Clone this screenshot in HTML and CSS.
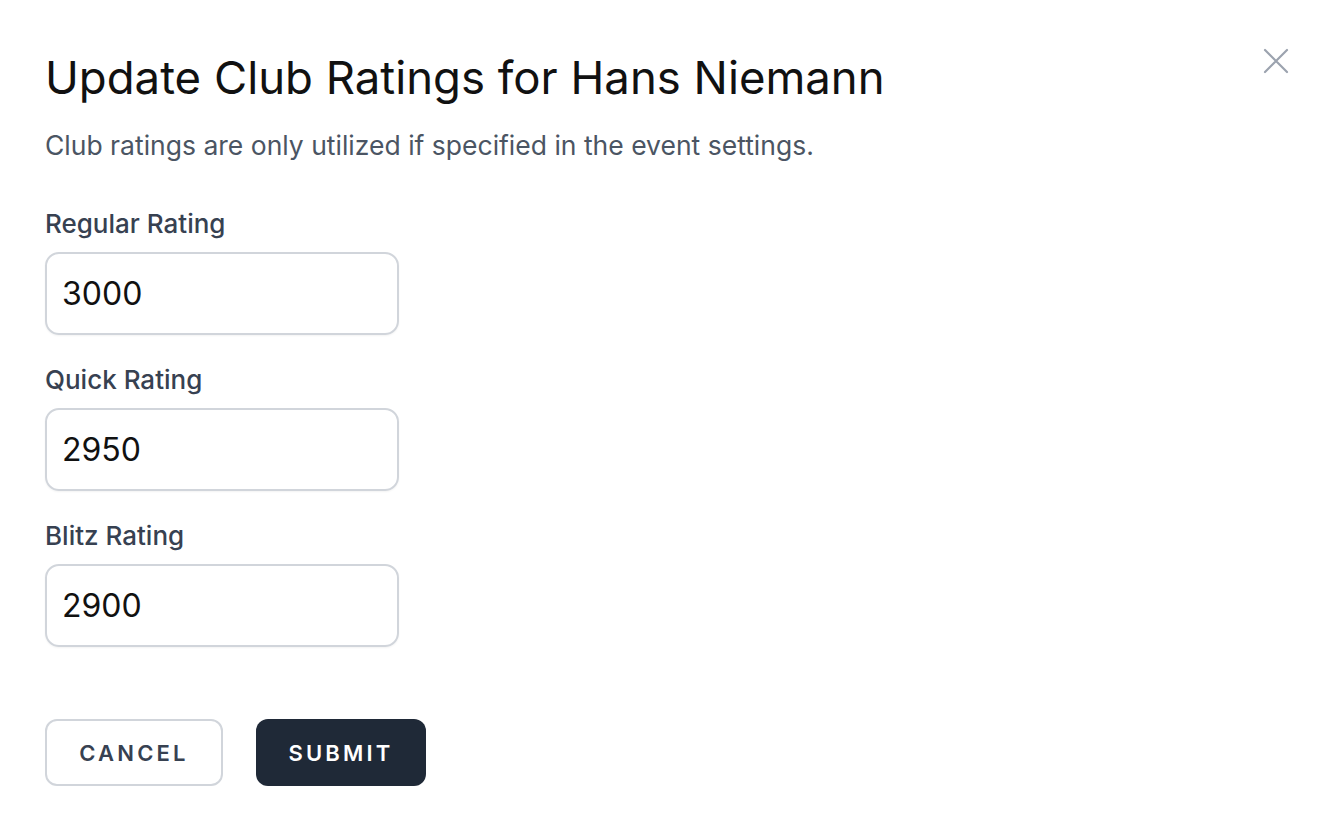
FILE: index.html
```html
<!DOCTYPE html>
<html>
<head>
<meta charset="utf-8">
<link rel="stylesheet" href="styles.css">
</head>
<body>
<div class="modal">
  <button class="close" aria-label="Close">
    <svg width="26" height="26" viewBox="0 0 26 26"><path d="M2 2 L24 24 M24 2 L2 24" stroke="#9ca3af" stroke-width="2.2" stroke-linecap="round" fill="none"/></svg>
  </button>
  <h1 class="title">Update Club Ratings for Hans Niemann</h1>
  <p class="subtitle">Club ratings are only utilized if specified in the event settings.</p>
  <div class="fields">
    <div class="field">
      <label class="label">Regular Rating</label>
      <div class="input">3000</div>
    </div>
    <div class="field">
      <label class="label">Quick Rating</label>
      <div class="input">2950</div>
    </div>
    <div class="field">
      <label class="label">Blitz Rating</label>
      <div class="input">2900</div>
    </div>
  </div>
  <div class="actions">
    <button class="btn btn-cancel">CANCEL</button>
    <button class="btn btn-submit">SUBMIT</button>
  </div>
</div>
</body>
</html>
```
FILE: styles.css
```css
html, body {
  margin: 0;
  padding: 0;
  background: #fff;
}
body {
  font-family: Inter, "Noto Sans", sans-serif;
  width: 1334px;
  height: 832px;
  overflow: hidden;
}
.modal {
  position: relative;
  padding: 50px 45px 0 45px;
}
.close {
  position: absolute;
  top: 48px;
  right: 45px;
  background: none;
  border: 0;
  padding: 0;
  width: 26px;
  height: 26px;
}
.title {
  margin: 0;
  font-size: 45.5px;
  font-weight: 400;
  line-height: 56px;
  color: #111;
  letter-spacing: 0;
}
.subtitle {
  margin: 21px 0 0 0;
  font-size: 26.5px;
  line-height: 36px;
  color: #4b5563;
}
.fields {
  margin-top: 43px;
  display: flex;
  flex-direction: column;
  gap: 27px;
}
.field {
  display: flex;
  flex-direction: column;
  gap: 10px;
}
.label {
  font-size: 26px;
  line-height: 36px;
  color: #374151;
  font-weight: 500;
}
.input {
  box-sizing: border-box;
  width: 354px;
  height: 83px;
  border: 2px solid #d1d5db;
  border-radius: 14px;
  padding: 0 15px;
  display: flex;
  align-items: center;
  font-size: 32px;
  color: #111;
  box-shadow: 0 1px 2px rgba(0,0,0,0.05);
}
.actions {
  margin-top: 72px;
  display: flex;
  gap: 33px;
  align-items: center;
}
.btn {
  font-family: inherit;
  font-size: 22px;
  font-weight: 600;
  letter-spacing: 3.2px;
  height: 67px;
  border-radius: 12px;
  cursor: pointer;
  padding: 0;
}
.btn-cancel {
  width: 178px;
  background: #fff;
  border: 2px solid #d1d5db;
  color: #374151;
}
.btn-submit {
  width: 170px;
  background: #1f2937;
  border: 0;
  color: #fff;
}
```
